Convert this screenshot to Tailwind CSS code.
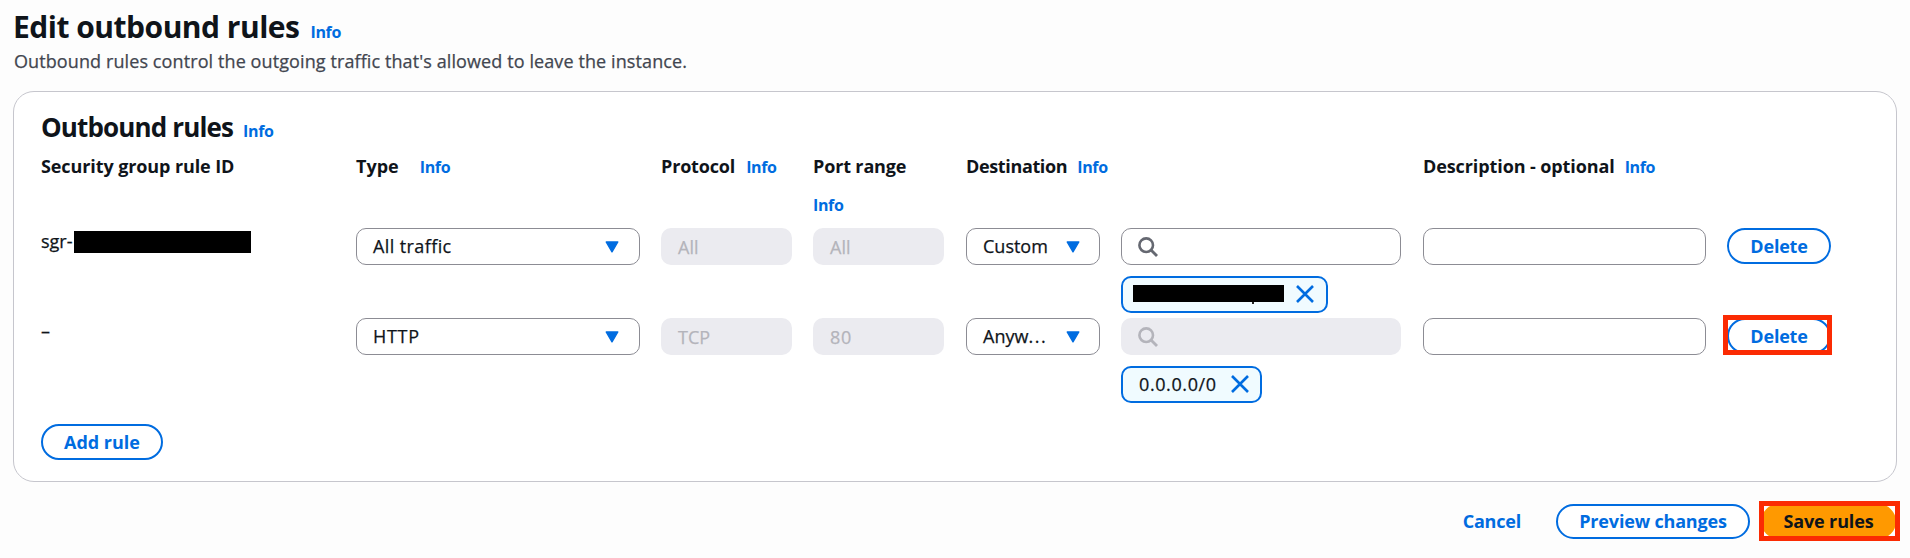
<!DOCTYPE html>
<html lang="en">
<head>
<meta charset="utf-8">
<title>Edit outbound rules</title>
<script src="https://cdn.jsdelivr.net/npm/@tailwindcss/browser@4"></script>
</head>
<body class="bg-[#fdfdfd] font-['Open_Sans',sans-serif] text-[18px] leading-6 text-[#0f141a]">
<svg class="hidden">
  <symbol id="caret" viewBox="0 0 14 12"><path d="M1.2 1h11.6L7 10.8z" fill="#006ce0" stroke="#006ce0" stroke-width="1.4" stroke-linejoin="round"/></symbol>
  <symbol id="search" viewBox="0 0 20 20"><circle cx="8.2" cy="8.2" r="6.8" fill="none" stroke="currentColor" stroke-width="2.6"/><path d="M13 13l6 6" stroke="currentColor" stroke-width="2.8"/></symbol>
  <symbol id="close" viewBox="0 0 18 18"><path d="M1 1l16 16M17 1L1 17" fill="none" stroke="#006ce0" stroke-width="2.6"/></symbol>
</svg>
<main class="pl-[13px] pr-[13px] pt-[9px] h-[558px] overflow-hidden">
  <div class="flex items-baseline gap-[11px] h-9">
    <h1 class="text-[30px] leading-9 font-bold tracking-[-0.5px]">Edit outbound rules</h1>
    <a class="text-[16px] font-bold text-[#006ce0] tracking-[-0.35px]">Info</a>
  </div>
  <p class="mt-1 pl-px text-[#424650] tracking-[0.1px] [-webkit-text-stroke:0.25px]">Outbound rules control the outgoing traffic that's allowed to leave the instance.</p>

  <section class="mt-[18px] h-[391px] bg-white border border-[#c6c6cd] rounded-[21px] pt-[19px] pl-[27px]">
    <div class="flex items-baseline gap-[10px] h-8">
      <h2 class="text-[26px] leading-8 font-bold tracking-[-0.86px]">Outbound rules</h2>
      <a class="text-[16px] font-bold text-[#006ce0] tracking-[-0.35px]">Info</a>
    </div>

    <div class="mt-[11px] h-[74px] grid grid-cols-[315px_305px_152px_153px_155px_302px_304px_110px] font-bold">
      <div class="tracking-[-0.1px]">Security group rule ID</div>
      <div class="flex items-baseline gap-[21px] h-6"><span>Type</span><a class="text-[16px] text-[#006ce0] tracking-[-0.35px]">Info</a></div>
      <div class="flex items-baseline gap-[11px] h-6"><span class="tracking-[-0.17px]">Protocol</span><a class="text-[16px] text-[#006ce0] tracking-[-0.35px]">Info</a></div>
      <div class="flex flex-wrap items-baseline content-start gap-x-[10px] gap-y-[15px] w-[131px]"><span class="tracking-[-0.15px]">Port range</span><a class="text-[16px] text-[#006ce0] tracking-[-0.35px]">Info</a></div>
      <div class="flex items-baseline gap-[10px] h-6"><span class="tracking-[-0.36px]">Destination</span><a class="text-[16px] text-[#006ce0] tracking-[-0.35px]">Info</a></div>
      <div></div>
      <div class="flex items-baseline gap-[10px] h-6"><span class="tracking-[-0.1px]">Description - optional</span><a class="text-[16px] text-[#006ce0] tracking-[-0.35px]">Info</a></div>
      <div></div>
    </div>

    <div class="h-[90px] grid grid-cols-[315px_305px_152px_153px_155px_302px_304px_110px] items-start [-webkit-text-stroke:0.25px]">
      <div class="flex pt-px"><span class="w-[33px]">sgr-</span><span class="mt-[2px] w-[177px] h-[22px] bg-black"></span></div>
      <div class="w-[284px] h-[37px] flex items-center justify-between pl-4 pr-5 bg-white border border-[#8c8c94] rounded-[10px]"><span class="-mt-px tracking-[0.4px]">All traffic</span><svg class="w-[14px] h-3"><use href="#caret"/></svg></div>
      <div class="w-[131px] h-[37px] flex items-center pl-[17px] bg-[#ebebf0] rounded-[10px] text-[#b4b4bb]">All</div>
      <div class="w-[131px] h-[37px] flex items-center pl-[17px] bg-[#ebebf0] rounded-[10px] text-[#b4b4bb]">All</div>
      <div class="w-[134px] h-[37px] flex items-center justify-between pl-4 pr-[19px] bg-white border border-[#8c8c94] rounded-[10px]"><span class="-mt-px">Custom</span><svg class="w-[14px] h-3"><use href="#caret"/></svg></div>
      <div>
        <div class="w-[280px] h-[37px] flex items-center pl-4 bg-white border border-[#8c8c94] rounded-[10px] text-[#656871]"><svg class="w-5 h-5"><use href="#search"/></svg></div>
        <div class="mt-[11px] w-[207px] h-[37px] flex items-center pl-[10px] bg-[#f0fbff] border-2 border-[#006ce0] rounded-[10px]">
          <span class="relative w-[151px] h-[17px] bg-black -mt-[2px]"><i class="absolute left-[119px] top-[17px] w-[2px] h-[2px] bg-[#222]"></i></span>
          <svg class="ml-3 -mt-[2px] w-[18px] h-[18px]"><use href="#close"/></svg>
        </div>
      </div>
      <div class="w-[283px] h-[37px] bg-white border border-[#8c8c94] rounded-[10px]"></div>
      <button class="w-[104px] h-9 border-2 border-[#006ce0] rounded-full font-bold text-[#006ce0] tracking-[-0.2px] [-webkit-text-stroke:0px]">Delete</button>
    </div>

    <div class="h-[90px] grid grid-cols-[315px_305px_152px_153px_155px_302px_304px_110px] items-start [-webkit-text-stroke:0.25px]">
      <div class="pt-px">–</div>
      <div class="w-[284px] h-[37px] flex items-center justify-between pl-4 pr-5 bg-white border border-[#8c8c94] rounded-[10px]"><span class="-mt-px tracking-[0.7px]">HTTP</span><svg class="w-[14px] h-3"><use href="#caret"/></svg></div>
      <div class="w-[131px] h-[37px] flex items-center pl-[17px] bg-[#ebebf0] rounded-[10px] text-[#b4b4bb]">TCP</div>
      <div class="w-[131px] h-[37px] flex items-center pl-[17px] bg-[#ebebf0] rounded-[10px] text-[#b4b4bb] tracking-[0.6px]">80</div>
      <div class="w-[134px] h-[37px] flex items-center justify-between pl-4 pr-[19px] bg-white border border-[#8c8c94] rounded-[10px]"><span class="-mt-px">Anyw<span class="tracking-[1.6px]">...</span></span><svg class="w-[14px] h-3"><use href="#caret"/></svg></div>
      <div>
        <div class="w-[280px] h-[37px] flex items-center pl-[17px] bg-[#ebebf0] rounded-[10px] text-[#b4b4bb]"><svg class="w-5 h-5"><use href="#search"/></svg></div>
        <div class="mt-[11px] w-[141px] h-[37px] flex items-center pl-4 bg-[#f0fbff] border-2 border-[#006ce0] rounded-[10px]">
          <span class="-mt-px w-[78px] tracking-[0.6px]">0.0.0.0/0</span>
          <svg class="ml-[14px] -mt-[2px] w-[18px] h-[18px]"><use href="#close"/></svg>
        </div>
      </div>
      <div class="w-[283px] h-[37px] bg-white border border-[#8c8c94] rounded-[10px]"></div>
      <div class="relative">
        <button class="w-[104px] h-9 border-2 border-[#006ce0] rounded-full font-bold text-[#006ce0] tracking-[-0.2px] [-webkit-text-stroke:0px]">Delete</button>
        <div class="absolute -left-1 -top-[3px] w-[109px] h-10 border-[5px] border-[#fb2b03]"></div>
      </div>
    </div>

    <button class="mt-4 w-[122px] h-9 border-2 border-[#006ce0] rounded-full font-bold text-[#006ce0]">Add rule</button>
  </section>

  <div class="mt-[22px] flex justify-end pr-px">
    <button class="mr-[35px] h-[35px] pb-[2px] font-bold text-[#006ce0] tracking-[-0.2px]">Cancel</button>
    <button class="mr-[11px] w-[194px] h-[35px] pb-px bg-white border-2 border-[#006ce0] rounded-full font-bold text-[#006ce0] tracking-[-0.17px]">Preview changes</button>
    <div class="relative bg-white">
      <button class="w-[135px] h-[35px] pb-[2px] bg-[#ff9900] rounded-full font-bold tracking-[-0.15px]">Save rules</button>
      <div class="absolute -left-[2px] -top-[3px] w-[141px] h-10 border-[5px] border-[#fb2b03]"></div>
    </div>
  </div>
</main>
</body>
</html>
